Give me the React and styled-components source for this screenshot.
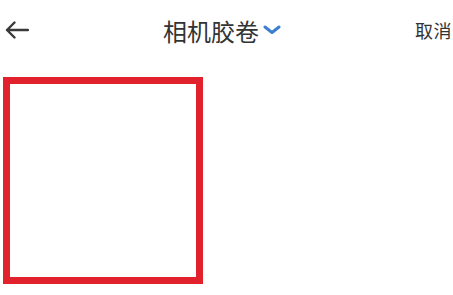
import React from 'react';
import { styled, createGlobalStyle } from 'styled-components';

const GlobalStyle = createGlobalStyle`
  html, body {
    margin: 0;
    padding: 0;
    background: #ffffff;
    font-family: "Noto Sans CJK SC", "Noto Sans", sans-serif;
  }
`;

const Page = styled.div`
  width: 453px;
  height: 295px;
  background: #fff;
  overflow: hidden;
`;

const Header = styled.div`
  height: 60px;
  display: flex;
  align-items: center;
  justify-content: space-between;
  padding: 0 1px 0 5px;
`;

const IconButton = styled.div`
  width: 24px;
  height: 24px;
  display: flex;
  align-items: center;
  justify-content: center;
  color: #3a3a3c;
  margin-top: -1px;
`;

const Title = styled.div`
  display: flex;
  align-items: center;
  gap: 4px;
  font-size: 24px;
  color: #333;
`;

const Cancel = styled.div`
  font-size: 18px;
  color: #333;
  letter-spacing: 0.5px;
`;

const Grid = styled.div`
  padding: 17px 3px;
  display: flex;
`;

const PhotoSlot = styled.div`
  width: 200px;
  height: 207px;
  box-sizing: border-box;
  border: 7px solid #e1222d;
  background: #fff;
`;

export default function App() {
  return (
    <Page>
      <GlobalStyle />
      <Header>
        <IconButton>
          <svg width="24" height="18" viewBox="0 0 24 18" fill="none">
            <path d="M23 9H2M9.5 1.5L2 9l7.5 7.5" stroke="currentColor" strokeWidth="2.4" strokeLinecap="round" strokeLinejoin="round" />
          </svg>
        </IconButton>
        <Title>
          相机胶卷
          <svg width="18" height="10" viewBox="0 0 18 10" fill="none">
            <path d="M2 2l7 5.5L16 2" stroke="#3a7fd0" strokeWidth="3" strokeLinecap="round" strokeLinejoin="round" />
          </svg>
        </Title>
        <Cancel>取消</Cancel>
      </Header>
      <Grid>
        <PhotoSlot />
      </Grid>
    </Page>
  );
}
